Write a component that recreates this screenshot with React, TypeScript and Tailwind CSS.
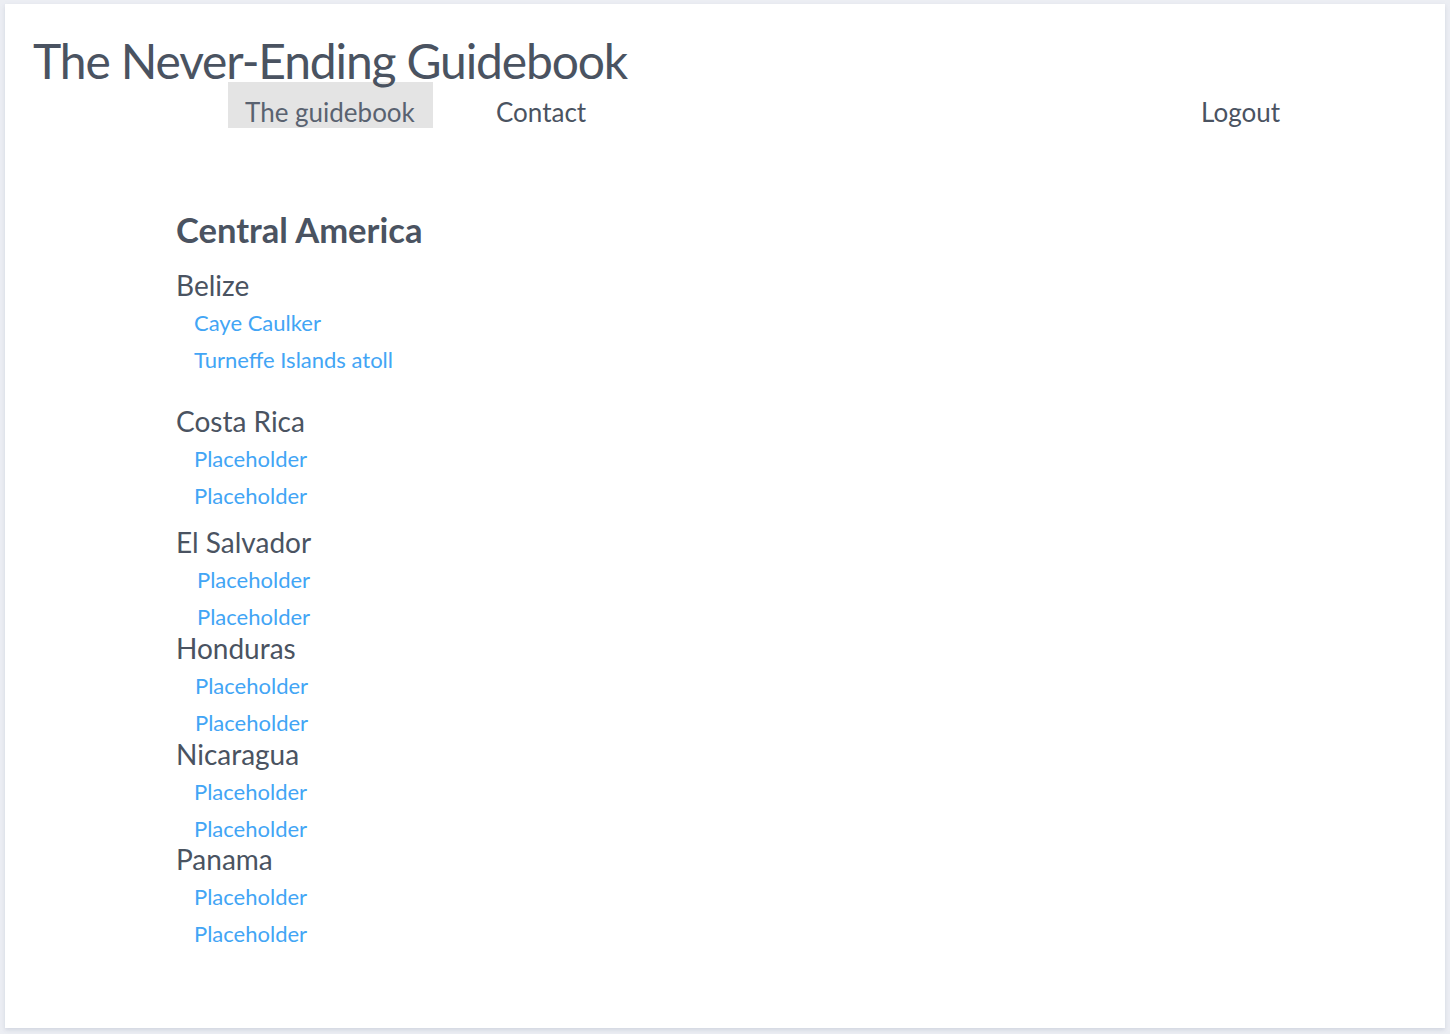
import React from "react";

type Country = { name: string; links: string[]; indent: string; gap: string };

const countries: Country[] = [
  { name: "Belize", links: ["Caye Caulker", "Turneffe Islands atoll"], indent: "pl-[18px]", gap: "mt-0" },
  { name: "Costa Rica", links: ["Placeholder", "Placeholder"], indent: "pl-[18px]", gap: "mt-[29px]" },
  { name: "El Salvador", links: ["Placeholder", "Placeholder"], indent: "pl-[21px]", gap: "mt-[14px]" },
  { name: "Honduras", links: ["Placeholder", "Placeholder"], indent: "pl-[19px]", gap: "-mt-[1px]" },
  { name: "Nicaragua", links: ["Placeholder", "Placeholder"], indent: "pl-[18px]", gap: "-mt-[1px]" },
  { name: "Panama", links: ["Placeholder", "Placeholder"], indent: "pl-[18px]", gap: "-mt-[2px]" },
];

export default function App() {
  return (
    <div
      className="min-h-screen bg-[#eceef3] pt-[4px] px-[5px] pb-[6px] text-[#4a5361]"
      style={{ fontFamily: "Lato, 'Open Sans', sans-serif" }}
    >
      <div className="h-[1024px] bg-white pl-[28px] pt-[33px] shadow-[0_2px_4px_rgba(160,170,190,0.35)]">
        {/* Header */}
        <h1 className="relative z-10 text-[48px] leading-[48px] font-normal tracking-[-1.15px] whitespace-nowrap">
          The Never-Ending Guidebook
        </h1>
        <nav className="-mt-[3px] flex items-start text-[26px] leading-[30px]">
          <a className="ml-[195px] w-[205px] h-[46px] bg-[#e4e4e4] pl-[17px] pt-[15px] text-[#596270] whitespace-nowrap">
            The guidebook
          </a>
          <a className="ml-[63px] pt-[15px] whitespace-nowrap">Contact</a>
          <a className="ml-auto mr-[165px] pt-[15px] whitespace-nowrap">Logout</a>
        </nav>

        {/* Guide list */}
        <div className="ml-[143px] mt-[82px]">
          <h2 className="text-[34.6px] leading-[40px] font-bold">Central America</h2>
          <div className="mt-[21px]">
            {countries.map((c, i) => (
              <div key={i} className={c.gap}>
                <h3 className="text-[28px] leading-[28px]">{c.name}</h3>
                <ul className={`mt-[5px] ${c.indent}`}>
                  {c.links.map((l, j) => (
                    <li key={j} className="text-[22px] leading-[37px]">
                      <a className="text-[#42a5f5] whitespace-nowrap">{l}</a>
                    </li>
                  ))}
                </ul>
              </div>
            ))}
          </div>
        </div>
      </div>
    </div>
  );
}
